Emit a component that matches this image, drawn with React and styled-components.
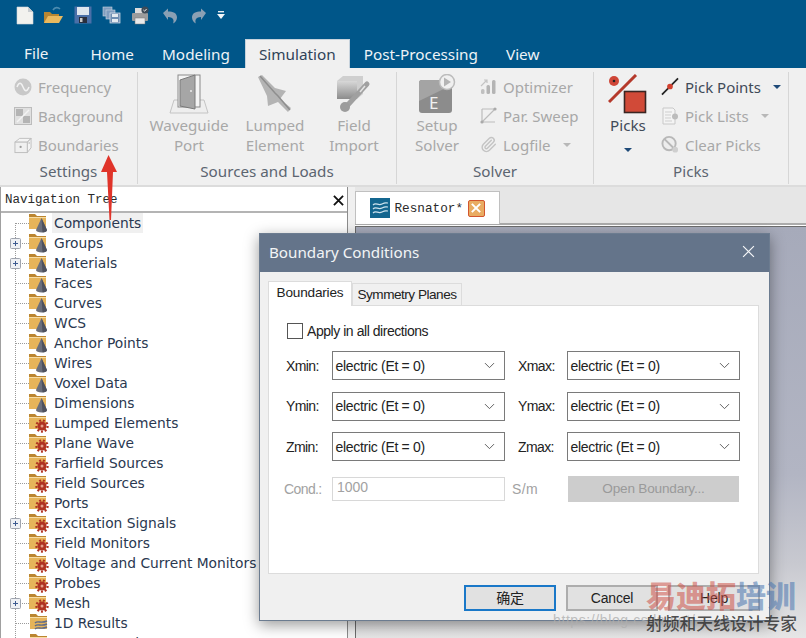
import { Fragment } from "react"
import styled, { createGlobalStyle } from "styled-components"
import { ChevronDown, Paperclip } from "lucide-react"

const GlobalStyle = createGlobalStyle`
  html, body {
    margin: 0;
    padding: 0;
    background: #fff;
  }
`

const Page = styled.div`
  position: relative;
  width: 806px;
  height: 638px;
  overflow: hidden;
  display: flex;
  flex-direction: column;
  font-family: "Noto Sans", sans-serif;
`

const Header = styled.div`
  height: 68px;
  flex: none;
  background: #005689;
  display: flex;
  flex-direction: column;
`

const QuickBar = styled.div`
  height: 39px;
  flex: none;
  display: flex;
  align-items: center;
  padding: 0 0 9px 10px;
  box-sizing: border-box;
`

const QuickButton = styled.div`
  width: ${(p) => p.$w || 29}px;
  display: flex;
  justify-content: center;
`

const TabRow = styled.div`
  height: 29px;
  display: flex;
  padding-left: 10px;
`

const MenuTab = styled.div`
  padding: 0 14px;
  margin-right: ${(p) => p.$after || 0}px;
  font-size: 15.3px;
  line-height: 30px;
  color: ${(p) => (p.$active ? "#2f4258" : "#eef3f7")};
  background: ${(p) => (p.$active ? "#f0f0f0" : "transparent")};
  box-shadow: ${(p) => (p.$active ? "inset 1px 1px 0 #c6d2dc, inset -1px 0 0 #c6d2dc" : "none")};
  white-space: nowrap;
  ${(p) => p.$raised && "transform: translateY(-1px);"}
`

const Ribbon = styled.div`
  height: 119px;
  flex: none;
  box-sizing: border-box;
  background: #f0f0f0;
  border-bottom: 2px solid #dcdcdc;
  padding-top: 4px;
  display: flex;
`

const Group = styled.div`
  width: ${(p) => p.$w}px;
  flex: none;
  box-sizing: border-box;
  height: 112px;
  border-right: 1px solid #d6d6d6;
  display: flex;
  flex-direction: column;
`

const GroupBody = styled.div`
  flex: 1;
  display: flex;
  padding-left: ${(p) => p.$pad || 0}px;
`

const GroupLabel = styled.div`
  height: 24px;
  line-height: 23px;
  text-align: center;
  font-size: 15.2px;
  color: #5c6570;
`

const SmallColumn = styled.div`
  display: flex;
  flex-direction: column;
  margin-left: ${(p) => p.$left || 0}px;
`

const SmallItem = styled.div`
  height: 29px;
  display: flex;
  align-items: center;
  gap: 6px;
  font-size: 15px;
  color: ${(p) => (p.$on ? "#3f4a58" : "#a8a8a8")};
  white-space: nowrap;
`

const SmallIcon = styled.div`
  width: 18px;
  height: 20px;
  display: flex;
  align-items: center;
  justify-content: center;
`

const Caret = styled.span`
  width: 0;
  height: 0;
  margin-left: ${(p) => p.$left ?? 6}px;
  margin-top: ${(p) => p.$top || 0}px;
  border-left: 4px solid transparent;
  border-right: 4px solid transparent;
  border-top: 4px solid ${(p) => (p.$on ? "#1f4a78" : "#b8b8b8")};
`

const LargeButton = styled.div`
  width: ${(p) => p.$w}px;
  flex: none;
  display: flex;
  flex-direction: column;
  align-items: center;
  font-size: 15.2px;
  line-height: 20px;
  color: ${(p) => (p.$on ? "#3f4a58" : "#a8a8a8")};
  text-align: center;
`

const LargeIcon = styled.div`
  height: 43px;
  box-sizing: border-box;
  padding-top: 2px;
  display: flex;
  align-items: flex-start;
  justify-content: center;
`

const Main = styled.div`
  flex: 1;
  display: flex;
  min-height: 0;
`

const NavPanel = styled.div`
  width: 348px;
  flex: none;
  box-sizing: border-box;
  border-left: 1px solid #a0a0a0;
  border-right: 1px solid #8c8c8c;
  background: #fff;
  display: flex;
  flex-direction: column;
  overflow: hidden;
`

const NavHeader = styled.div`
  height: 26px;
  flex: none;
  box-sizing: border-box;
  border-bottom: 2px solid #b4b4b4;
  display: flex;
  align-items: center;
  justify-content: space-between;
  padding: 2px 3px 0 4px;
  font-family: "Liberation Mono", monospace;
  font-size: 12.5px;
  color: #2a2a2a;
`

const TreeRow = styled.div`
  height: 20px;
  display: flex;
  align-items: center;
  white-space: nowrap;
`

const TreeText = styled.span`
  margin-left: 3px;
  padding: 0 2px;
  line-height: 20px;
  font-family: "DejaVu Sans", sans-serif;
  font-size: 13.8px;
  color: #2a3850;
  background: ${(p) => (p.$selected ? "#f0f0f0" : "transparent")};
`

const Splitter = styled.div`
  width: 7px;
  flex: none;
  background: #f0f0f0;
`

const Workspace = styled.div`
  flex: 1;
  display: flex;
  flex-direction: column;
  min-width: 0;
`

const DocStrip = styled.div`
  height: 38px;
  flex: none;
  box-sizing: border-box;
  background: #e6e6e6;
  border-bottom: 2px solid #ababab;
  padding-top: 4px;
  display: flex;
`

const DocTab = styled.div`
  width: 145px;
  height: 33px;
  box-sizing: border-box;
  background: #fff;
  border: 1px solid #c0c0c0;
  border-bottom: none;
  display: flex;
  align-items: center;
  padding-left: 14px;
  gap: 4.5px;
  font-family: "Liberation Mono", monospace;
  font-size: 12.7px;
  color: #2a2a2a;
`

const DocClose = styled.div`
  width: 17px;
  height: 17px;
  box-sizing: border-box;
  border: 1px solid #d2562e;
  border-radius: 2px;
  background: #e9ac62;
  display: flex;
  align-items: center;
  justify-content: center;
`

const Canvas = styled.div`
  flex: 1;
  margin-top: 1px;
  border-top: 1px solid #6c6c6c;
  border-left: 1px solid #6c6c6c;
  background: linear-gradient(#a6aaba 0%, #b2b5c3 60%, #c8c9d0 82%, #e6e6e6 100%);
`

/* dialog floats over the main window */
const Dialog = styled.div`
  position: absolute;
  left: 259px;
  top: 233px;
  width: 511px;
  height: 388px;
  box-sizing: border-box;
  border: 1px solid #6c7c90;
  background: #f0f0f0;
  box-shadow: 0 4px 14px rgba(0, 0, 0, 0.4);
  display: flex;
  flex-direction: column;
  font-family: "Liberation Sans", sans-serif;
`

const DialogTitle = styled.div`
  height: 38px;
  flex: none;
  box-sizing: border-box;
  background: #64748a;
  display: flex;
  align-items: center;
  justify-content: space-between;
  padding: 0 14px 3px 9px;
  font-family: "Noto Sans", sans-serif;
  font-size: 15.2px;
  color: #f2f4f6;
`

const DialogBody = styled.div`
  flex: 1;
  padding: 9px 10px 0 8px;
  display: flex;
  flex-direction: column;
`

const PageTabs = styled.div`
  height: 24px;
  flex: none;
  display: flex;
  align-items: flex-end;
  position: relative;
  z-index: 1;
`

const PageTab = styled.div`
  height: ${(p) => (p.$active ? 25 : 22)}px;
  width: ${(p) => p.$w}px;
  box-sizing: border-box;
  background: ${(p) => (p.$active ? "#fff" : "#f0f0f0")};
  border: 1px solid #dcdcdc;
  border-bottom: none;
  margin-bottom: ${(p) => (p.$active ? -1 : 0)}px;
  text-align: center;
  font-size: 13.6px;
  line-height: ${(p) => (p.$active ? 22 : 21)}px;
  letter-spacing: ${(p) => (p.$active ? -0.2 : -0.5)}px;
  color: #222;
`

const TabPanel = styled.div`
  height: 269px;
  flex: none;
  box-sizing: border-box;
  background: #fff;
  border: 1px solid #dcdcdc;
  padding: 16px 18px 0 18px;
`

const CheckRow = styled.div`
  display: flex;
  align-items: center;
  gap: 4px;
  height: 17px;
  margin-bottom: 12px;
  font-size: 14px;
  letter-spacing: -0.45px;
  color: #222;
`

const CheckBox = styled.div`
  width: 16px;
  height: 16px;
  box-sizing: border-box;
  border: 1px solid #555;
  background: #fff;
`

const FieldGrid = styled.div`
  display: grid;
  grid-template-columns: 45px 173px 62px 173px;
  row-gap: 11.5px;
`

const FieldLabel = styled.div`
  display: flex;
  align-items: center;
  padding-left: ${(p) => p.$indent || 0}px;
  margin-left: ${(p) => (p.$off ? -3 : -1)}px;
  font-size: 14px;
  letter-spacing: -0.6px;
  color: ${(p) => (p.$off ? "#a2a2a2" : "#222")};
`

const SelectBox = styled.div`
  height: 29px;
  box-sizing: border-box;
  border: 1.5px solid #7a7a7a;
  background: #fff;
  display: flex;
  align-items: center;
  justify-content: space-between;
  padding: 0 6px 0 2.5px;
  font-size: 14px;
  letter-spacing: -0.3px;
  color: #222;
`

const CondRow = styled.div`
  display: grid;
  grid-template-columns: 45px 173px 62px 172px;
  align-items: center;
  margin-top: 15px;
`

const CondInput = styled.div`
  height: 24px;
  box-sizing: border-box;
  border: 1.5px solid #d8d8d8;
  padding-left: 4px;
  line-height: 19px;
  font-size: 14px;
  color: #a2a2a2;
`

const CondUnit = styled.div`
  padding-left: 7px;
  font-size: 14px;
  letter-spacing: 0.4px;
  color: #a2a2a2;
`

const OpenButton = styled.div`
  height: 26px;
  background: #cdcdcd;
  text-align: center;
  line-height: 26px;
  font-size: 13.6px;
  letter-spacing: -0.2px;
  color: #9a9a9a;
  margin-left: 1px;
`

const Footer = styled.div`
  flex: 1;
  display: flex;
  justify-content: flex-end;
  gap: 10px;
  padding-top: 11px;
  margin-right: -1px;
`

const FootButton = styled.div`
  width: 92px;
  height: 26px;
  box-sizing: border-box;
  background: #e1e1e1;
  border: 2px solid ${(p) => (p.$primary ? "#1a78c8" : "#adadad")};
  text-align: center;
  line-height: 22px;
  font-family: "Liberation Sans", "Noto Sans CJK SC", sans-serif;
  font-size: 14px;
  letter-spacing: -0.2px;
  color: #222;
`

const ArrowMark = styled.svg`
  position: absolute;
  left: 100px;
  top: 155px;
`

const Watermark = styled.div`
  position: absolute;
  left: 646px;
  top: 576px;
  font-family: "Noto Sans CJK SC", sans-serif;
  pointer-events: none;
`

const BrandLine = styled.div`
  font-size: 30px;
  font-weight: 900;
  line-height: 36px;
  white-space: nowrap;
`

const BrandPart = styled.span`
  color: ${(p) => p.$color};
`

const SloganLine = styled.div`
  font-size: 16.8px;
  line-height: 20px;
  margin-top: 1px;
  font-weight: 500;
  color: rgba(50, 50, 50, 0.85);
  white-space: nowrap;
`

const UrlMark = styled.div`
  position: absolute;
  left: 553px;
  top: 612px;
  font-family: "Liberation Sans", sans-serif;
  font-size: 14px;
  letter-spacing: 0.6px;
  color: rgba(175, 175, 175, 0.8);
  white-space: nowrap;
`

/* ---- drawings ---- */

const NewDocIcon = () => (
  <svg width="18" height="19" viewBox="0 0 18 19">
    <path d="M1 1h11l5 5v12H1z" fill="#f2f2ee" stroke="#d0d4d8" strokeWidth=".6" />
    <path d="M12 1v5h5z" fill="#c9cdd0" />
  </svg>
)

const OpenIcon = () => (
  <svg width="21" height="19" viewBox="0 0 21 19">
    <path d="M1 17V6h6l2 2h7v9z" fill="#b78632" />
    <path d="M1 17l4-7h15l-4 7z" fill="#eab95e" />
    <path d="M10 4c2-3 5-3 7-1" fill="none" stroke="#4d8cb0" strokeWidth="1.6" />
  </svg>
)

const SaveIcon = () => (
  <svg width="18" height="18" viewBox="0 0 18 18">
    <rect x="0.5" y="0.5" width="17" height="17" fill="#4a6fa8" />
    <rect x="3" y="1" width="12" height="8" fill="#dfe6ee" />
    <rect x="5" y="11" width="8" height="6" fill="#2a2f3d" />
    <rect x="6" y="12" width="2.5" height="4" fill="#c8c8c8" />
  </svg>
)

const SaveAllIcon = () => (
  <svg width="19" height="18" viewBox="0 0 19 18">
    <rect x="1" y="1" width="9" height="9" fill="#7f9cbe" stroke="#c9d6e2" strokeWidth=".6" />
    <rect x="4" y="4" width="9" height="9" fill="#7f9cbe" stroke="#c9d6e2" strokeWidth=".6" />
    <rect x="8" y="7" width="10" height="10" fill="#6f8eb2" stroke="#dfe6ee" strokeWidth=".7" />
    <rect x="10" y="8" width="6" height="3" fill="#e4eaf0" />
    <rect x="10" y="13" width="6" height="3" fill="#e4eaf0" />
  </svg>
)

const PrintIcon = () => (
  <svg width="19" height="19" viewBox="0 0 19 19">
    <rect x="4" y="2" width="10" height="6" fill="#dcdcdc" />
    <rect x="1" y="7" width="16" height="8" rx="1" fill="#9c9c9c" />
    <rect x="4" y="12" width="10" height="6" fill="#eaeaea" stroke="#777" strokeWidth=".5" />
    <circle cx="14" cy="4" r="3.6" fill="#3d4a56" />
    <path d="M12.4 4l1.2 1.2 2-2.2" stroke="#eee" fill="none" />
  </svg>
)

const UndoIcon = ({ flip }) => (
  <svg width="18" height="17" viewBox="0 0 18 17" style={flip ? { transform: "scaleX(-1)" } : undefined}>
    <path d="M2 6l5-4.5V4.5c5 0 9 1.5 9 6 0 2.5-1.5 5-4 6 1-2 1.2-6.5-5-6.5V13z" fill="#8aa0b4" />
  </svg>
)

const QuickMore = () => (
  <svg width="8" height="9" viewBox="0 0 8 9">
    <rect x="1" y="0" width="6" height="1.4" fill="#e8eef2" />
    <path d="M0 3h8L4 8z" fill="#f2f6f8" />
  </svg>
)

const FrequencyIcon = () => (
  <svg width="18" height="18" viewBox="0 0 18 18">
    <circle cx="9" cy="9" r="8.5" fill="#c8c8c8" />
    <path d="M3 9c2-5 4-5 6 0s4 5 6 0" fill="none" stroke="#f2f2f2" strokeWidth="1.5" />
  </svg>
)

const BackgroundIcon = () => (
  <svg width="18" height="18" viewBox="0 0 18 18">
    <rect x="0.5" y="0.5" width="17" height="17" fill="#e0e0e0" stroke="#bcbcbc" />
    <path d="M2 2h7v7H2zM9 9h7v7H9z" fill="#b4b4b4" />
    <path d="M3 15L15 3" stroke="#f4f4f4" strokeWidth="1.5" />
  </svg>
)

const DiceIcon = () => (
  <svg width="19" height="18" viewBox="0 0 19 18">
    <path d="M1 6l5-4h12l-4 4zM14 6l4-4v10l-4 5z" fill="#f4f4f4" stroke="#bdbdbd" />
    <rect x="1" y="6" width="13" height="11" fill="#f0f0f0" stroke="#bdbdbd" />
    <circle cx="7" cy="11" r="1.2" fill="#9c9c9c" />
    <circle cx="16" cy="7" r=".8" fill="#b0b0b0" />
  </svg>
)

const DoorIcon = () => (
  <svg width="42" height="40" viewBox="0 0 42 40">
    <path d="M6 26h30l4 13H2z" fill="#eeeeee" stroke="#c4c4c4" />
    <rect x="10" y="1" width="22" height="32" fill="#f4f4f4" stroke="#8a8a8a" />
    <path d="M12 6l15-5v34l-15-3z" fill="#a6a6a6" stroke="#7a7a7a" />
    <circle cx="23" cy="17" r="1" fill="#ececec" />
  </svg>
)

const LumpedIcon = () => (
  <svg width="40" height="40" viewBox="0 0 40 40">
    <path d="M3 3l4-2 13 13 11 3-6 8 11 9-3 4-10-10-10 4-1-10z" fill="#b4b4b4" />
    <path d="M5 2l15 17 3 3 12 14" fill="none" stroke="#8e8e8e" strokeWidth="1.5" />
  </svg>
)

const FieldImportIcon = () => (
  <svg width="38" height="40" viewBox="0 0 38 40">
    <defs>
      <linearGradient id="fieldFace" x1="0" y1="0" x2="0" y2="1">
        <stop offset="0" stopColor="#d8d8d8" />
        <stop offset="1" stopColor="#8c8c8c" />
      </linearGradient>
    </defs>
    <path d="M2 7l6-5h20v18l-6 5H2z" fill="#cfcfcf" />
    <path d="M2 7h20v18H2z" fill="url(#fieldFace)" />
    <path d="M10 34L32 10" stroke="#a0a0a0" strokeWidth="5" strokeLinecap="round" />
    <circle cx="10" cy="33" r="5" fill="#9c9c9c" />
    <path d="M25 18l5-6" stroke="#e4e4e4" strokeWidth="1.5" />
  </svg>
)

const SolverIcon = () => (
  <svg width="38" height="42" viewBox="0 0 38 42">
    <rect x="1" y="6" width="33" height="33" rx="3" fill="#8c8c8c" />
    <path d="M1 9a3 3 0 0 1 3-3h27a3 3 0 0 1 3 3v2L1 27z" fill="#a4a4a4" />
    <text x="11" y="35" fontFamily="Noto Sans" fontSize="17" fill="#f0f0f0">E</text>
    <circle cx="29" cy="8" r="7.5" fill="#f0f0f0" stroke="#bcbcbc" strokeWidth="1.5" />
    <path d="M26 3.5l7 4.5-7 4.5z" fill="#b4b4b4" />
  </svg>
)

const OptimizerIcon = () => (
  <svg width="17" height="17" viewBox="0 0 17 17">
    <rect x="1" y="11" width="3.5" height="5" rx="1.5" fill="#c0c0c0" />
    <rect x="6.5" y="7" width="3.5" height="9" rx="1.5" fill="#b4b4b4" />
    <rect x="12" y="2" width="3.5" height="14" rx="1.5" fill="#b4b4b4" />
    <path d="M1 8l6-6M4 2h3v3" fill="none" stroke="#c4c4c4" strokeWidth="1.2" />
  </svg>
)

const SweepIcon = () => (
  <svg width="17" height="17" viewBox="0 0 17 17">
    <path d="M2 2v13h13M2 15L15 2H2" fill="none" stroke="#bcbcbc" strokeWidth="1.2" />
    <circle cx="2" cy="15" r="1.6" fill="#aaa" />
    <circle cx="15" cy="2" r="1.6" fill="#aaa" />
  </svg>
)

const PicksIcon = () => (
  <svg width="40" height="42" viewBox="0 0 40 42">
    <path d="M1 28L28 1" stroke="#b5392b" strokeWidth="3" />
    <circle cx="6" cy="7" r="5" fill="#cf4637" />
    <circle cx="6" cy="7" r="1.3" fill="#222" />
    <rect x="16.5" y="17.5" width="21" height="21" fill="#d14a38" stroke="#3a2522" strokeWidth="1.6" />
  </svg>
)

const PickPointIcon = () => (
  <svg width="19" height="19" viewBox="0 0 19 19">
    <path d="M1 18L18 1" stroke="#222" strokeWidth="1.8" />
    <circle cx="9.5" cy="9.5" r="3" fill="#d2402f" />
  </svg>
)

const PickListIcon = () => (
  <svg width="17" height="18" viewBox="0 0 17 18">
    <path d="M1 1h10l2 2v14H1z" fill="#f4f4f4" stroke="#c8c8c8" />
    <path d="M3 5h7M3 8h6M3 11h6M3 14h7" stroke="#cfcfcf" />
    <circle cx="13" cy="9.5" r="3" fill="#bcbcbc" />
  </svg>
)

const ClearIcon = () => (
  <svg width="19" height="19" viewBox="0 0 19 19">
    <circle cx="8.5" cy="8.5" r="7" fill="#ededed" stroke="#b8b8b8" strokeWidth="2" />
    <path d="M3.5 3.5l10 10" stroke="#b8b8b8" strokeWidth="2" />
    <circle cx="15" cy="15" r="3" fill="#cfcfcf" />
  </svg>
)

const FolderBase = ({ children, x = 0 }) => (
  <svg width="20" height="20" viewBox="0 0 20 20" style={{ flex: "none" }}>
    <g transform={`translate(${x} 0)`}>
      <path d="M0 1h6l2 2h9v12H0z" fill="#bb8530" />
      <path d="M0 5h17v11H0z" fill="#e6b45a" />
      <path d="M0 4.5h17" stroke="#f7dda4" />
    </g>
    {children}
  </svg>
)

const ConeFolder = () => (
  <FolderBase>
    <path d="M12.5 5l5.5 12a5.5 2.5 0 0 1-11 0z" fill="#6b6f7c" />
    <path d="M12.5 5l1 14.5a5 2.5 0 0 0 4.5-2.5z" fill="#4f525e" />
  </FolderBase>
)

const GearFolder = () => (
  <FolderBase>
    <circle cx="13" cy="13" r="4.5" fill="#b03322" />
    <circle cx="13" cy="13" r="5.6" fill="none" stroke="#b03322" strokeWidth="2.2" strokeDasharray="2 1.8" />
    <circle cx="13" cy="13" r="1.5" fill="#e4a08a" />
  </FolderBase>
)

const WaveFolder = () => (
  <FolderBase x={1}>
    <path d="M6 10c3-3 5 1 12-2M6 13c3-3 5 1 12-2M6 16c3-3 5 1 12-2" fill="none" stroke="#5d6b8c" strokeWidth="1.4" />
  </FolderBase>
)

const TreeLines = ({ first, plus }) => (
  <svg width="28" height="20" viewBox="0 0 28 20" style={{ flex: "none" }}>
    <path d={first ? "M14.5 10v10" : "M14.5 0v20"} stroke="#9a9a9a" strokeDasharray="1 1" />
    <path d="M15 10.5h13" stroke="#9a9a9a" strokeDasharray="1 1" />
    {plus && (
      <>
        <rect x="9.5" y="5.5" width="10" height="10" rx="1" fill="#eef0f4" stroke="#9fa4ae" />
        <path d="M12 10.5h5M14.5 8v5" stroke="#3c5a90" />
      </>
    )}
  </svg>
)

const DocIcon = () => (
  <svg width="20" height="20" viewBox="0 0 20 20">
    <rect width="20" height="20" fill="#14668f" />
    <path d="M3 7c3-3 5 1 9-1s3-1 6-1M3 11c3-3 5 1 9-1s3-1 6-1M3 15c3-3 5 1 9-1s3-1 6-1" fill="none" stroke="#cfe3ee" strokeWidth="1.2" />
  </svg>
)

const CloseCross = ({ size, color, width }) => (
  <svg width={size} height={size} viewBox="0 0 12 12">
    <path d="M1 1l10 10M11 1L1 11" stroke={color} strokeWidth={width} />
  </svg>
)

/* ---- data ---- */

const treeItems = [
  { name: "Components", icon: ConeFolder, first: true, selected: true },
  { name: "Groups", icon: ConeFolder, plus: true },
  { name: "Materials", icon: ConeFolder, plus: true },
  { name: "Faces", icon: ConeFolder },
  { name: "Curves", icon: ConeFolder },
  { name: "WCS", icon: ConeFolder },
  { name: "Anchor Points", icon: ConeFolder },
  { name: "Wires", icon: ConeFolder },
  { name: "Voxel Data", icon: ConeFolder },
  { name: "Dimensions", icon: ConeFolder },
  { name: "Lumped Elements", icon: GearFolder },
  { name: "Plane Wave", icon: GearFolder },
  { name: "Farfield Sources", icon: GearFolder },
  { name: "Field Sources", icon: GearFolder },
  { name: "Ports", icon: GearFolder },
  { name: "Excitation Signals", icon: GearFolder, plus: true },
  { name: "Field Monitors", icon: GearFolder },
  { name: "Voltage and Current Monitors", icon: GearFolder },
  { name: "Probes", icon: GearFolder },
  { name: "Mesh", icon: GearFolder, plus: true },
  { name: "1D Results", icon: WaveFolder },
  { name: "2D/3D Results", icon: WaveFolder },
]

const boundaryRows = ["X", "Y", "Z"]

const Select = () => (
  <SelectBox>
    electric (Et = 0)
    <ChevronDown size={17} strokeWidth={1.3} color="#555" />
  </SelectBox>
)

const App = () => {
  return (
    <Page>
      <GlobalStyle />
      <Header>
        <QuickBar>
          <QuickButton><NewDocIcon /></QuickButton>
          <QuickButton><OpenIcon /></QuickButton>
          <QuickButton><SaveIcon /></QuickButton>
          <QuickButton><SaveAllIcon /></QuickButton>
          <QuickButton><PrintIcon /></QuickButton>
          <QuickButton><UndoIcon /></QuickButton>
          <QuickButton><UndoIcon flip /></QuickButton>
          <QuickButton $w={15}><QuickMore /></QuickButton>
        </QuickBar>
        <TabRow>
          <MenuTab $after={14} $raised>File</MenuTab>
          <MenuTab>Home</MenuTab>
          <MenuTab $after={1}>Modeling</MenuTab>
          <MenuTab $active>Simulation</MenuTab>
          <MenuTab>Post-Processing</MenuTab>
          <MenuTab>View</MenuTab>
        </TabRow>
      </Header>

      <Ribbon>
        <Group $w={138}>
          <GroupBody $pad={14}>
            <SmallColumn>
              <SmallItem><SmallIcon><FrequencyIcon /></SmallIcon>Frequency</SmallItem>
              <SmallItem><SmallIcon><BackgroundIcon /></SmallIcon>Background</SmallItem>
              <SmallItem><SmallIcon><DiceIcon /></SmallIcon>Boundaries</SmallItem>
            </SmallColumn>
          </GroupBody>
          <GroupLabel>Settings</GroupLabel>
        </Group>
        <Group $w={259}>
          <GroupBody $pad={8}>
            <LargeButton $w={86}><LargeIcon><DoorIcon /></LargeIcon>Waveguide<br />Port</LargeButton>
            <LargeButton $w={86}><LargeIcon><LumpedIcon /></LargeIcon>Lumped<br />Element</LargeButton>
            <LargeButton $w={72}><LargeIcon><FieldImportIcon /></LargeIcon>Field<br />Import</LargeButton>
          </GroupBody>
          <GroupLabel>Sources and Loads</GroupLabel>
        </Group>
        <Group $w={197}>
          <GroupBody $pad={10}>
            <LargeButton $w={60}><LargeIcon><SolverIcon /></LargeIcon>Setup<br />Solver</LargeButton>
            <SmallColumn $left={12}>
              <SmallItem><SmallIcon><OptimizerIcon /></SmallIcon>Optimizer</SmallItem>
              <SmallItem><SmallIcon><SweepIcon /></SmallIcon>Par. Sweep</SmallItem>
              <SmallItem>
                <SmallIcon><Paperclip size={17} color="#c4c4c4" strokeWidth={2} /></SmallIcon>
                Logfile<Caret />
              </SmallItem>
            </SmallColumn>
          </GroupBody>
          <GroupLabel>Solver</GroupLabel>
        </Group>
        <Group $w={195}>
          <GroupBody $pad={9}>
            <LargeButton $w={50} $on>
              <LargeIcon><PicksIcon /></LargeIcon>
              Picks
              <Caret $on $left={0} $top={13} />
            </LargeButton>
            <SmallColumn $left={8}>
              <SmallItem $on><SmallIcon><PickPointIcon /></SmallIcon>Pick Points<Caret $on /></SmallItem>
              <SmallItem><SmallIcon><PickListIcon /></SmallIcon>Pick Lists<Caret /></SmallItem>
              <SmallItem><SmallIcon><ClearIcon /></SmallIcon>Clear Picks</SmallItem>
            </SmallColumn>
          </GroupBody>
          <GroupLabel>Picks</GroupLabel>
        </Group>
      </Ribbon>

      <Main>
        <NavPanel>
          <NavHeader>
            Navigation Tree
            <CloseCross size={11} color="#111" width={2} />
          </NavHeader>
          <div>
            {treeItems.map((item) => {
              const Icon = item.icon
              return (
                <TreeRow key={item.name}>
                  <TreeLines first={item.first} plus={item.plus} />
                  <Icon />
                  <TreeText $selected={item.selected}>{item.name}</TreeText>
                </TreeRow>
              )
            })}
          </div>
        </NavPanel>
        <Splitter />
        <Workspace>
          <DocStrip>
            <DocTab>
              <DocIcon />
              Resnator*
              <DocClose><CloseCross size={10} color="#fff" width={2.4} /></DocClose>
            </DocTab>
          </DocStrip>
          <Canvas />
        </Workspace>
      </Main>

      <Dialog>
        <DialogTitle>
          Boundary Conditions
          <CloseCross size={13} color="#f4f6f8" width={1.1} />
        </DialogTitle>
        <DialogBody>
          <PageTabs>
            <PageTab $active $w={84}>Boundaries</PageTab>
            <PageTab $w={110}>Symmetry Planes</PageTab>
          </PageTabs>
          <TabPanel>
            <CheckRow>
              <CheckBox />
              Apply in all directions
            </CheckRow>
            <FieldGrid>
              {boundaryRows.map((axis) => (
                <Fragment key={axis}>
                  <FieldLabel>{axis}min:</FieldLabel>
                  <Select />
                  <FieldLabel $indent={14}>{axis}max:</FieldLabel>
                  <Select />
                </Fragment>
              ))}
            </FieldGrid>
            <CondRow>
              <FieldLabel $off>Cond.:</FieldLabel>
              <CondInput>1000</CondInput>
              <CondUnit>S/m</CondUnit>
              <OpenButton>Open Boundary...</OpenButton>
            </CondRow>
          </TabPanel>
          <Footer>
            <FootButton $primary>确定</FootButton>
            <FootButton>Cancel</FootButton>
            <FootButton>Help</FootButton>
          </Footer>
        </DialogBody>
      </Dialog>

      <ArrowMark width="18" height="66" viewBox="0 0 18 66">
        <path d="M8.5 0L17 17h-4l-2 48-1.5 0L7 17H1z" fill="#e0342a" />
      </ArrowMark>

      <UrlMark>https://blog.csdn.net/</UrlMark>
      <Watermark>
        <BrandLine>
          <BrandPart $color="rgba(205, 80, 70, 0.55)">易迪拓</BrandPart>
          <BrandPart $color="rgba(70, 115, 175, 0.55)">培训</BrandPart>
        </BrandLine>
        <SloganLine>射频和天线设计专家</SloganLine>
      </Watermark>
    </Page>
  )
}

export default App
